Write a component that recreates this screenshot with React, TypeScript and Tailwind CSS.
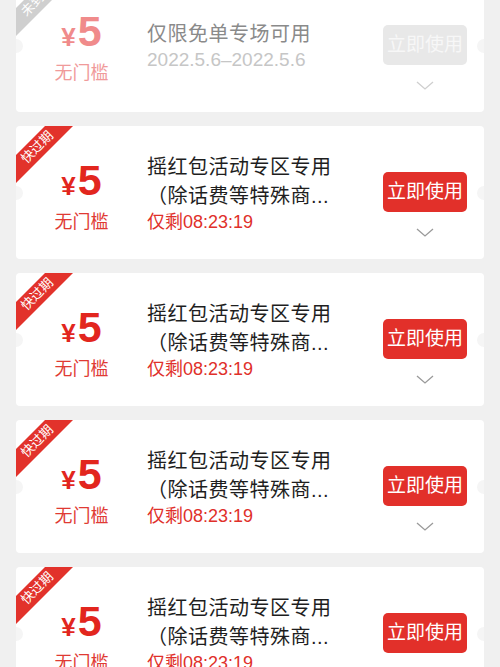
import React from "react";

type Coupon = {
  expired?: boolean;
};

function Chevron({ color }: { color: string }) {
  return (
    <svg width="18" height="9" viewBox="0 0 18 9" fill="none">
      <polyline points="1,1 9,8 17,1" stroke={color} strokeWidth="1.3" fill="none" />
    </svg>
  );
}

function Ribbon({ label, color }: { label: string; color: string }) {
  return (
    <div className="absolute left-0 top-0 w-[60px] h-[60px] pointer-events-none">
      <svg width="60" height="60" viewBox="0 0 60 60" className="absolute left-0 top-0">
        <polygon points="29,0 57,0 0,57 0,29" fill={color} />
      </svg>
      <span className="absolute left-[21px] top-[21px] -translate-x-1/2 -translate-y-1/2 -rotate-45 text-[13px] leading-none text-white whitespace-nowrap">
        {label}
      </span>
    </div>
  );
}

function Notches() {
  return (
    <>
      <div className="absolute -left-[7px] top-1/2 -translate-y-1/2 w-[14px] h-[14px] rounded-full bg-[#f5f5f5]" />
      <div className="absolute -right-[7px] top-1/2 -translate-y-1/2 w-[14px] h-[14px] rounded-full bg-[#f5f5f5]" />
    </>
  );
}

function FirstCard() {
  return (
    <div className="relative h-[133px] bg-white rounded-[4px] overflow-hidden flex">
      <Ribbon label="未到期" color="#cfcfcf" />
      <Notches />
      <div className="w-[131px] shrink-0 flex flex-col items-center pt-[31px]">
        <div className="flex items-baseline text-[#f08b8b] leading-none">
          <span className="text-[26px] font-semibold mr-[2px]">¥</span>
          <span className="text-[43px] font-semibold">5</span>
        </div>
        <div className="mt-[11px] text-[18px] leading-[18px] text-[#f09a9a]">无门槛</div>
      </div>
      <div className="flex-1 flex flex-col justify-center">
        <div className="text-[20px] leading-[29px] text-[#8a8a8a] tracking-[0.5px]">仅限免单专场可用</div>
        <div className="text-[19px] leading-[22px] text-[#c6c6c6]">2022.5.6–2022.5.6</div>
      </div>
      <div className="w-[84px] mr-[17px] shrink-0 flex flex-col items-center pt-[46px]">
        <div className="w-[84px] h-[40px] rounded-[5px] bg-[#e8e8e8] flex items-center justify-center text-[19px] text-[#f7f7f7]">
          立即使用
        </div>
        <div className="mt-[16px] flex">
          <Chevron color="#cfcfcf" />
        </div>
      </div>
    </div>
  );
}

function ActiveCard() {
  return (
    <div className="relative h-[133px] bg-white rounded-[4px] overflow-hidden flex">
      <Ribbon label="快过期" color="#e2322b" />
      <Notches />
      <div className="w-[131px] shrink-0 flex flex-col items-center pt-[33px]">
        <div className="flex items-baseline text-[#e2261e] leading-none">
          <span className="text-[26px] font-semibold mr-[2px]">¥</span>
          <span className="text-[43px] font-semibold">5</span>
        </div>
        <div className="mt-[11px] text-[18px] leading-[18px] text-[#e03a33]">无门槛</div>
      </div>
      <div className="flex-1 flex flex-col justify-center">
        <div className="text-[20px] leading-[29px] text-[#1e1e1e] tracking-[0.5px]">摇红包活动专区专用</div>
        <div className="text-[20px] leading-[29px] text-[#1e1e1e] tracking-[0.5px]">（除话费等特殊商...</div>
        <div className="text-[18px] leading-[22px] text-[#e0302a]">仅剩08:23:19</div>
      </div>
      <div className="w-[84px] mr-[17px] shrink-0 flex flex-col items-center pt-[46px]">
        <div className="w-[84px] h-[40px] rounded-[5px] bg-[#e2302a] flex items-center justify-center text-[19px] text-white">
          立即使用
        </div>
        <div className="mt-[16px] flex">
          <Chevron color="#9a9a9a" />
        </div>
      </div>
    </div>
  );
}

export default function App() {
  const items: Coupon[] = [{}, {}, {}, {}];
  return (
    <div
      className="w-[500px] h-[667px] overflow-hidden bg-[#f0f0f0]"
      style={{ fontFamily: '"Liberation Sans", "Noto Sans CJK SC", sans-serif' }}
    >
      <div className="px-[16px] mt-[-21px] flex flex-col gap-[14px]">
        <FirstCard />
        {items.map((_, i) => (
          <ActiveCard key={i} />
        ))}
      </div>
    </div>
  );
}
